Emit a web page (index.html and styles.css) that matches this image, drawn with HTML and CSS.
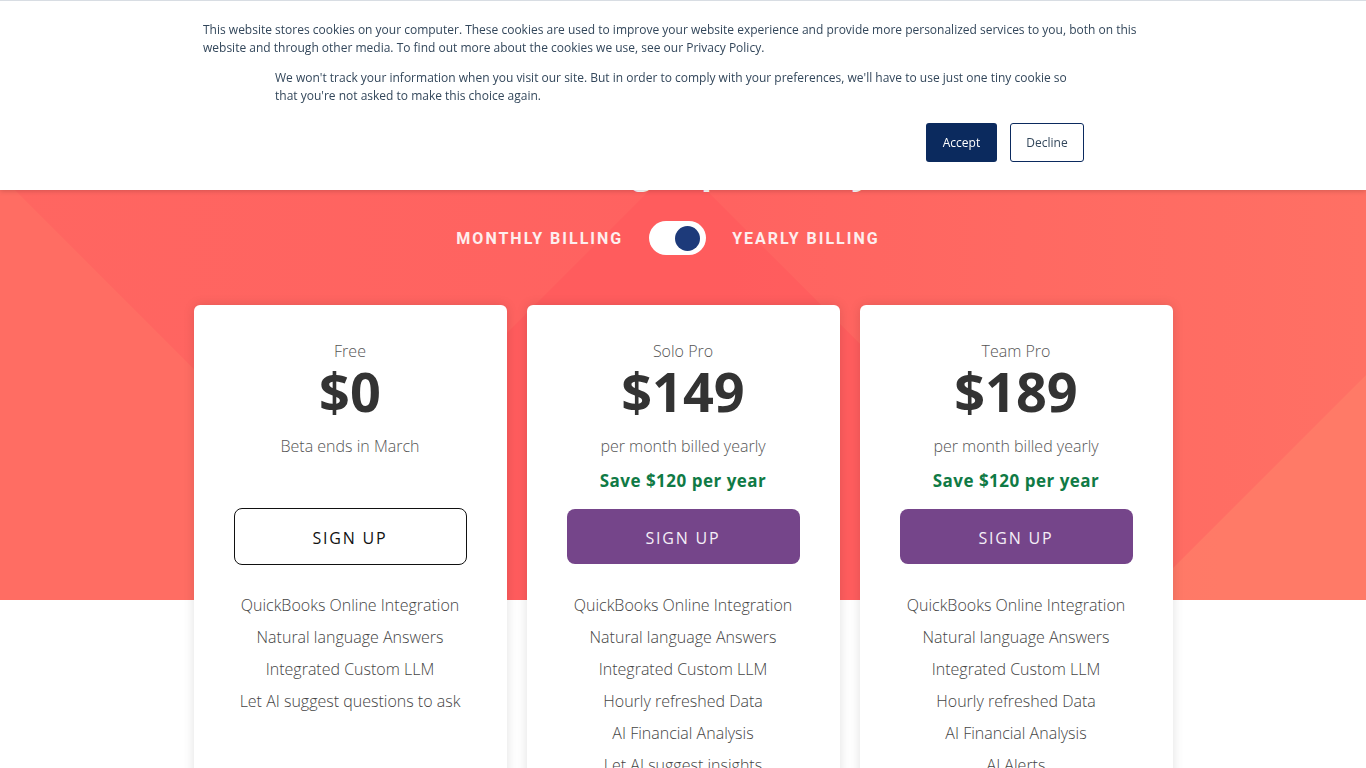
FILE: index.html
```html
<!DOCTYPE html>
<html lang="en">
<head>
<meta charset="utf-8">
<title>Pricing</title>
<link rel="stylesheet" href="styles.css">
</head>
<body>
<div class="page">
  <svg class="hero-bg" viewBox="0 0 1366 600" preserveAspectRatio="none" aria-hidden="true">
    <polygon points="0,175 425,600 0,600" fill="#ff6f64" fill-opacity="0.85"/>
    <polygon points="678,162 1116,600 240,600" fill="#ff5a5c" fill-opacity="0.7"/>
    <polygon points="1366,375 1366,600 1141,600" fill="#ff7b67" fill-opacity="0.9"/>
  </svg>
  <h1 class="title">Find the right plan for you</h1>
  <div class="billing">
    <span class="billing-label">MONTHLY BILLING</span>
    <span class="switch"><span class="knob"></span></span>
    <span class="billing-label">YEARLY BILLING</span>
  </div>
  <div class="cards">
    <div class="card">
      <div class="plan">Free</div>
      <div class="price">$0</div>
      <div class="sub">Beta ends in March</div>
      <div class="save empty">&nbsp;</div>
      <a class="btn btn-outline">SIGN UP</a>
      <ul class="features">
        <li>QuickBooks Online Integration</li>
        <li>Natural language Answers</li>
        <li>Integrated Custom LLM</li>
        <li>Let AI suggest questions to ask</li>
      </ul>
    </div>
    <div class="card">
      <div class="plan">Solo Pro</div>
      <div class="price">$149</div>
      <div class="sub">per month billed yearly</div>
      <div class="save">Save $120 per year</div>
      <a class="btn btn-fill">SIGN UP</a>
      <ul class="features">
        <li>QuickBooks Online Integration</li>
        <li>Natural language Answers</li>
        <li>Integrated Custom LLM</li>
        <li>Hourly refreshed Data</li>
        <li>AI Financial Analysis</li>
        <li>Let AI suggest insights</li>
      </ul>
    </div>
    <div class="card">
      <div class="plan">Team Pro</div>
      <div class="price">$189</div>
      <div class="sub">per month billed yearly</div>
      <div class="save">Save $120 per year</div>
      <a class="btn btn-fill">SIGN UP</a>
      <ul class="features">
        <li>QuickBooks Online Integration</li>
        <li>Natural language Answers</li>
        <li>Integrated Custom LLM</li>
        <li>Hourly refreshed Data</li>
        <li>AI Financial Analysis</li>
        <li>AI Alerts</li>
        <li>Let AI suggest insights</li>
      </ul>
    </div>
  </div>
</div>

<div class="cookie">
  <div class="cookie-inner">
    <p class="cookie-text">This website stores cookies on your computer. These cookies are used to improve your website experience and provide more personalized services to you, both on this website and through other media. To find out more about the cookies we use, see our Privacy Policy.</p>
    <p class="cookie-text indent">We won't track your information when you visit our site. But in order to comply with your preferences, we'll have to use just one tiny cookie so that you're not asked to make this choice again.</p>
    <div class="cookie-actions">
      <a class="cbtn accept">Accept</a>
      <a class="cbtn decline">Decline</a>
    </div>
  </div>
</div>
</body>
</html>
```
FILE: styles.css
```css
* { box-sizing: border-box; }
html, body { margin: 0; padding: 0; }
body {
  background: #ffffff;
  font-family: "Open Sans", "Liberation Sans", sans-serif;
}

.page {
  position: relative;
  background-color: #ffffff;
  background-image: linear-gradient(90deg, #ff6661 0%, #ff6260 50%, #ff7064 100%);
  background-size: 100% 600px;
  background-repeat: no-repeat;
  display: flex;
  flex-direction: column;
  align-items: center;
  padding-bottom: 40px;
}
.hero-bg {
  position: absolute;
  left: 0; top: 0;
  width: 100%; height: 600px;
  z-index: 0;
}
.title {
  position: relative;
  z-index: 1;
  margin: 146px 0 0;
  font-size: 36px;
  line-height: 48px;
  font-weight: 700;
  color: #ffffff;
}

.billing {
  position: relative;
  z-index: 1;
  margin-top: 27px;
  padding-right: 30px;
  display: flex;
  align-items: center;
  gap: 26px;
  height: 34px;
}
.billing-label {
  font-family: Roboto, "Liberation Sans", sans-serif;
  font-weight: 700;
  font-size: 16px;
  letter-spacing: 2px;
  color: #fdeeee;
}
.switch {
  width: 57px;
  height: 34px;
  border-radius: 17px;
  background: #ffffff;
  display: flex;
  align-items: center;
  justify-content: flex-end;
  padding-right: 6px;
}
.knob {
  width: 25px;
  height: 25px;
  border-radius: 50%;
  background: #1d3a7a;
}

.cards {
  position: relative;
  z-index: 1;
  margin-top: 50px;
  display: flex;
  gap: 20px;
  align-items: flex-start;
}
.card {
  width: 313px;
  height: 560px;
  background: #ffffff;
  border-radius: 6px;
  box-shadow: 0 0 12px rgba(0, 0, 0, 0.12);
  padding-top: 35px;
  display: flex;
  flex-direction: column;
  align-items: center;
  text-align: center;
}
.plan {
  font-size: 16px;
  line-height: 22px;
  font-weight: 300;
  color: #555555;
}
.price {
  font-size: 54px;
  line-height: 56px;
  font-weight: 700;
  color: #333333;
  margin-top: 1px;
}
.sub {
  margin-top: 16px;
  font-size: 16px;
  line-height: 22px;
  font-weight: 300;
  color: #555555;
}
.save {
  margin-top: 13px;
  font-size: 17px;
  line-height: 22px;
  font-weight: 700;
  letter-spacing: 0.5px;
  color: #0f7a45;
}
.btn {
  display: flex;
  align-items: center;
  justify-content: center;
  width: 233px;
  padding-top: 3px;
  font-size: 16px;
  letter-spacing: 1.8px;
  font-weight: 400;
  border-radius: 8px;
}
.btn-fill {
  height: 55px;
  margin-top: 17px;
  margin-bottom: 25px;
  background: #75458a;
  color: #f4eef7;
}
.btn-outline {
  height: 57px;
  margin-top: 16px;
  margin-bottom: 24px;
  border: 1px solid #111111;
  color: #111111;
  background: #ffffff;
}
.features {
  list-style: none;
  margin: 0;
  padding: 0;
}
.features li {
  font-size: 16px;
  line-height: 32px;
  font-weight: 300;
  color: #444444;
}

.cookie {
  position: fixed;
  left: 0; top: 0;
  width: 100%;
  height: 190px;
  background: #ffffff;
  border-top: 1px solid #d8dde3;
  box-shadow: 0 1px 5px rgba(0, 0, 0, 0.18);
  z-index: 10;
}
.cookie-inner {
  width: 960px;
  margin: 0 auto;
  padding-top: 20px;
}
.cookie-text {
  margin: 0;
  font-size: 12px;
  line-height: 18px;
  color: #33475b;
}
.cookie-text.indent {
  margin: 12px 72px 0;
}
.cookie-actions {
  display: flex;
  justify-content: flex-end;
  gap: 13px;
  margin-top: 18px;
  padding-right: 79px;
}
.cbtn {
  display: flex;
  align-items: center;
  justify-content: center;
  height: 39px;
  font-size: 12px;
  border-radius: 3px;
}
.accept {
  width: 71px;
  background: #0b2a5e;
  color: #ffffff;
}
.decline {
  width: 74px;
  border: 1px solid #0b2a5e;
  color: #33475b;
  background: #ffffff;
}
```
